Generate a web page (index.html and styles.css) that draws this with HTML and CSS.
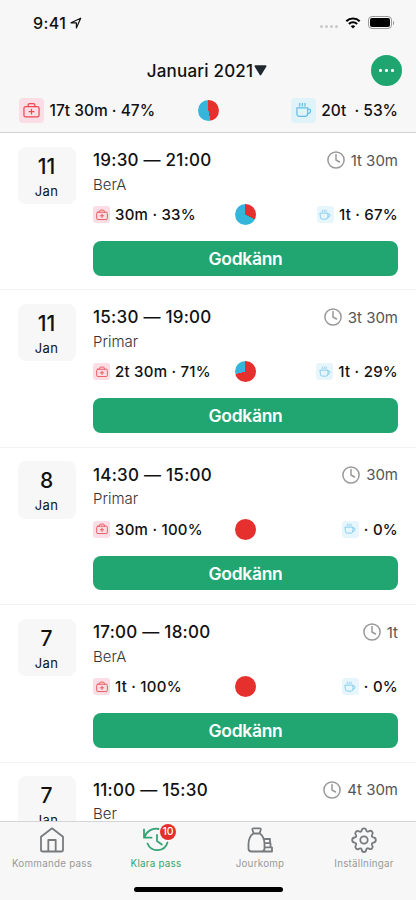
FILE: index.html
```html
<!DOCTYPE html>
<html lang="sv">
<head>
<meta charset="utf-8">
<meta name="viewport" content="width=device-width, initial-scale=1">
<title>Klara pass</title>
<link rel="stylesheet" href="styles.css">
</head>
<body>
<svg class="defs" aria-hidden="true">
  <symbol id="kit" viewBox="0 0 18 18"><rect x="1" y="4.8" width="16" height="11" rx="1.8"/><path d="M5.500 4.800V3.200Q5.500 1.700 7 1.700h4q1.500 0 1.500 1.500v1.600M9 7.700v5M6.500 10.200h5"/></symbol>
  <symbol id="cup" viewBox="0 0 18 18"><path d="M2 6.200h11.500v6q0 3-3 3H5q-3 0-3-3zM13.500 7.500h1.300q1.700 0 1.700 1.800 0 3-3.500 3.200M5 4.300q-.6-.8 0-1.400t0-1.400M7.800 4.300q-.6-.8 0-1.400t0-1.400M10.600 4.300q-.6-.8 0-1.400t0-1.400"/></symbol>
  <symbol id="clock" viewBox="0 0 18 18"><circle cx="9" cy="9" r="8.100"/><path d="M9 3.500V9l3.600 2"/></symbol>
</svg>
<div class="screen">
  <header class="header">
    <div class="status">
      <span class="time">9:41</span>
      <svg class="location" viewBox="0 0 12 12"><path d="M1 5.800 10.700 1.200 6.400 10.900V5.800z"/></svg>
      <span class="signal"><i></i><i></i><i></i><i></i></span>
      <svg class="wifi" viewBox="0 0 16 12"><path d="M1.300 4.200a9.600 9.600 0 0 1 13.400 0M3.900 6.900a5.900 5.900 0 0 1 8.200 0"/><path class="dot" d="M8 11.600 5.800 9.300a3.200 3.200 0 0 1 4.400 0z"/></svg>
      <span class="battery"><b></b></span>
    </div>
    <div class="titlebar">
      <h1>Januari 2021</h1>
      <svg class="caret" viewBox="0 0 12 10"><path d="M1.200 1h9.600L6 8.800z"/></svg>
      <button class="more" aria-label="Mer"><i></i><i></i><i></i></button>
    </div>
    <div class="stats summary">
      <div class="stat"><span class="tile red"><svg><use href="#kit"/></svg></span><span>17t 30m · 47%</span></div>
      <i class="pie" style="--share:47%"></i>
      <div class="stat end"><span class="tile blue"><svg><use href="#cup"/></svg></span><span>20t&nbsp; · 53%</span></div>
    </div>
  </header>
  <main class="list">
    <article class="shift">
      <div class="date"><b>11</b><span>Jan</span></div>
      <div class="body">
        <div class="head"><h2>19:30 — 21:00</h2><span class="duration"><svg><use href="#clock"/></svg>1t 30m</span></div>
        <p>BerA</p>
        <div class="stats">
          <div class="stat"><span class="tile red"><svg><use href="#kit"/></svg></span><span>30m · 33%</span></div>
          <i class="pie" style="--share:33%"></i>
          <div class="stat end"><span class="tile blue"><svg><use href="#cup"/></svg></span><span>1t · 67%</span></div>
        </div>
        <button class="approve">Godkänn</button>
      </div>
    </article>
    <article class="shift">
      <div class="date"><b>11</b><span>Jan</span></div>
      <div class="body">
        <div class="head"><h2>15:30 — 19:00</h2><span class="duration"><svg><use href="#clock"/></svg>3t 30m</span></div>
        <p>Primar</p>
        <div class="stats">
          <div class="stat"><span class="tile red"><svg><use href="#kit"/></svg></span><span>2t 30m · 71%</span></div>
          <i class="pie" style="--share:71%"></i>
          <div class="stat end"><span class="tile blue"><svg><use href="#cup"/></svg></span><span>1t · 29%</span></div>
        </div>
        <button class="approve">Godkänn</button>
      </div>
    </article>
    <article class="shift">
      <div class="date"><b>8</b><span>Jan</span></div>
      <div class="body">
        <div class="head"><h2>14:30 — 15:00</h2><span class="duration"><svg><use href="#clock"/></svg>30m</span></div>
        <p>Primar</p>
        <div class="stats">
          <div class="stat"><span class="tile red"><svg><use href="#kit"/></svg></span><span>30m · 100%</span></div>
          <i class="pie" style="--share:100%"></i>
          <div class="stat end"><span class="tile blue"><svg><use href="#cup"/></svg></span><span>· 0%</span></div>
        </div>
        <button class="approve">Godkänn</button>
      </div>
    </article>
    <article class="shift">
      <div class="date"><b>7</b><span>Jan</span></div>
      <div class="body">
        <div class="head"><h2>17:00 — 18:00</h2><span class="duration"><svg><use href="#clock"/></svg>1t</span></div>
        <p>BerA</p>
        <div class="stats">
          <div class="stat"><span class="tile red"><svg><use href="#kit"/></svg></span><span>1t · 100%</span></div>
          <i class="pie" style="--share:100%"></i>
          <div class="stat end"><span class="tile blue"><svg><use href="#cup"/></svg></span><span>· 0%</span></div>
        </div>
        <button class="approve">Godkänn</button>
      </div>
    </article>
    <article class="shift">
      <div class="date"><b>7</b><span>Jan</span></div>
      <div class="body">
        <div class="head"><h2>11:00 — 15:30</h2><span class="duration"><svg><use href="#clock"/></svg>4t 30m</span></div>
        <p>Ber</p>
      </div>
    </article>
  </main>
  <footer class="footer">
    <nav class="tabs">
      <a class="tab">
        <svg viewBox="0 0 26 26"><path d="M2 9.700 13 1.300l11 8.400v13q0 1.800-1.800 1.800H3.800Q2 24.500 2 22.700zM9.300 24.500V13h7.400v11.500"/></svg>
        <span>Kommande pass</span>
      </a>
      <a class="tab active">
        <span class="icon">
          <svg class="history" viewBox="0 0 26 26"><path d="M1 2.500v8.200h7.500M1.500 10.200A12 12 0 0 1 15.500 2M4.500 16.500a10.600 10.600 0 0 0 20-1M14 8v6l4.800 3.500"/></svg>
          <em class="badge">10</em>
        </span>
        <span>Klara pass</span>
      </a>
      <a class="tab">
        <svg viewBox="0 0 26 26"><path d="M6.700 6.500 5.500 3q-.5-1.700 1-1.700h6.200q1.500 0 1 1.700l-1.200 3.500M6.300 6.500h6.600Q17.500 10 17.500 17v4.500q0 3-3 3H4.500q-3 0-3-3V17Q1.500 10 6.300 6.500zM16.500 12h6.500v4.200h-5.500M17.500 16.200h6v4.200h-6M17.500 20.400H25v4.100H14.500"/></svg>
        <span>Jourkomp</span>
      </a>
      <a class="tab">
        <svg viewBox="0 0 26 26"><circle cx="13" cy="13" r="3.700"/><path d="M10.800 3q.3-1.700 2.200-1.700T15.200 3q.5 2.300 2.500 1.400l.6-.4q1.500-.8 2.800.7t.2 2.800q-1.500 2.200 1 2.900 2.500.3 2.500 2.600t-2.500 2.600q-2.500.7-1 2.900 1 1.400-.3 2.800t-2.700.5q-2.600-1.500-3.100 1-.3 2.200-2.200 2.200T10.800 23q-.5-2.600-3.100-1.100-1.400.9-2.700-.5t-.3-2.800q1.500-2.200-1-2.900-2.500-.3-2.500-2.600t2.500-2.600q2.500-.7 1-2.900-1.100-1.400.2-2.800t2.800-.6q2.600 1.500 3.100-1.200z"/></svg>
        <span>Inställningar</span>
      </a>
    </nav>
    <div class="home-indicator"></div>
  </footer>
</div>
</body>
</html>
```
FILE: styles.css
```css
* { box-sizing: border-box; }
body { margin: 0; background: #fff; font-family: Inter, "Liberation Sans", sans-serif; color: #111; }
h1, h2, p { margin: 0; font-weight: 500; }
button { border: 0; padding: 0; font-family: inherit; }
svg { display: block; fill: none; stroke: currentColor; stroke-linecap: round; stroke-linejoin: round; }
.defs { position: absolute; width: 0; height: 0; }

.screen { display: flex; flex-direction: column; height: 900px; overflow: hidden; }

.header { flex: none; height: 133px; background: #f7f7f7; border-bottom: 1px solid #d2d2d2; }
.status { display: flex; align-items: center; height: 45px; padding: 0 22px 0 33px; }
.time { font-size: 16px; font-weight: 500; letter-spacing: 0.4px; }
.location { width: 12px; height: 12px; margin-left: 4px; stroke-width: 1.2; }
.signal { display: flex; gap: 1.5px; margin: 8px 7px 0 auto; }
.signal i { width: 3.5px; height: 3.5px; border-radius: 50%; background: #c8c8c8; }
.wifi { width: 16px; height: 12px; stroke-width: 2.1; stroke-linecap: butt; color: #000; }
.wifi .dot { fill: currentColor; stroke: none; }
.battery { display: flex; align-items: center; width: 24px; height: 12.5px; margin: 0 2px 0 7px; padding: 1px; border: 1px solid #999; border-radius: 4px; position: relative; }
.battery b { flex: 1; height: 8.5px; border-radius: 2px; background: #000; }
.battery::after { content: ""; position: absolute; right: -3px; top: 3.5px; width: 1.5px; height: 4px; border-radius: 0 2px 2px 0; background: #999; }

.titlebar { display: grid; grid-template-columns: 1fr auto auto 1fr; align-items: center; height: 49px; padding: 2px 14px 0 12px; }
.titlebar h1 { grid-column: 2; font-size: 17px; line-height: 24px; letter-spacing: 0.2px; }
.caret { width: 13px; height: 11px; margin-left: 1px; fill: #202830; stroke: #202830; stroke-width: 1.5; }
.more { display: flex; justify-self: end; align-items: center; justify-content: center; gap: 3px; width: 31px; height: 31px; border-radius: 50%; background: #1fa56f; }
.more i { width: 2.7px; height: 2.7px; border-radius: 50%; background: #fff; }

.stats { display: grid; grid-template-columns: 1fr 21px 1fr; align-items: center; height: 22px; font-size: 15px; font-weight: 500; letter-spacing: 0.25px; }
.stat { display: flex; align-items: center; gap: 5px; white-space: nowrap; }
.stat.end { justify-content: flex-end; }
.tile { display: flex; align-items: center; justify-content: center; width: 17px; height: 17px; border-radius: 3px; }
.tile svg { width: 12px; height: 12px; stroke-width: 1.3; }
.tile.red { background: #fbdde5; color: #e94a50; }
.tile.blue { background: #e7f6fd; color: #7cc8ea; }
.pie { width: 21px; height: 21px; border-radius: 50%; background: conic-gradient(#e6302e var(--share), #35b5da 0); }
.summary { height: 32px; padding: 0 18px 0 19px; font-size: 15.5px; font-weight: 450; letter-spacing: 0; }
.summary .stat { gap: 5.5px; }
.summary .tile { width: 25px; height: 25px; border-radius: 4px; }
.summary .tile svg { width: 17px; height: 17px; }
.summary .blue { background: #dff3f8; color: #67bde6; }

.list { flex: 1; min-height: 0; overflow: hidden; }
.shift { display: grid; grid-template-columns: 58px 1fr; gap: 17.5px; height: 157.4px; padding: 13.5px 18px 0 17.5px; border-bottom: 1px solid #f3f3f3; }
.date { display: flex; flex-direction: column; align-items: center; height: 57.5px; padding-top: 7px; border-radius: 8px; background: #f7f7f7; }
.date b { font-size: 21px; line-height: 26px; font-weight: 500; }
.date span { font-size: 13px; line-height: 22px; letter-spacing: 0.3px; }
.head { display: flex; align-items: center; justify-content: space-between; height: 27px; }
.head h2 { font-size: 17px; letter-spacing: 0.25px; }
.duration { display: flex; align-items: center; gap: 6px; font-size: 15px; color: #555; }
.duration svg { width: 18px; height: 18px; stroke-width: 1.5; color: #999; }
.body p { font-size: 15px; line-height: 22px; font-weight: 300; color: #333; }
.body .stats { margin-top: 8px; }
.approve { display: block; width: 100%; height: 34.5px; margin-top: 15.5px; border-radius: 8px; background: #21a571; color: #fff; font-size: 17.5px; font-weight: 600; letter-spacing: -0.3px; }

.footer { flex: none; height: 79px; background: #f7f7f7; border-top: 1px solid #d5d5d5; }
.tabs { display: grid; grid-template-columns: repeat(4, 1fr); height: 65px; padding-top: 5px; }
.tab { display: flex; flex-direction: column; align-items: center; gap: 3px; color: #999; font-size: 9.8px; line-height: 16px; letter-spacing: 0.25px; }
.tab svg { width: 26px; height: 26px; stroke-width: 1.8; color: #777b7e; }
.tab.active, .tab.active svg { color: #33a474; }
.icon { position: relative; }
.badge { position: absolute; left: 17px; top: -3px; width: 16px; height: 16px; border-radius: 50%; background: #e52e2c; color: #fff; font-size: 10.5px; line-height: 16px; font-style: normal; font-weight: 500; letter-spacing: 0; text-align: center; }
.home-indicator { width: 149px; height: 5px; margin: 0 auto; border-radius: 3px; background: #000; }
```
